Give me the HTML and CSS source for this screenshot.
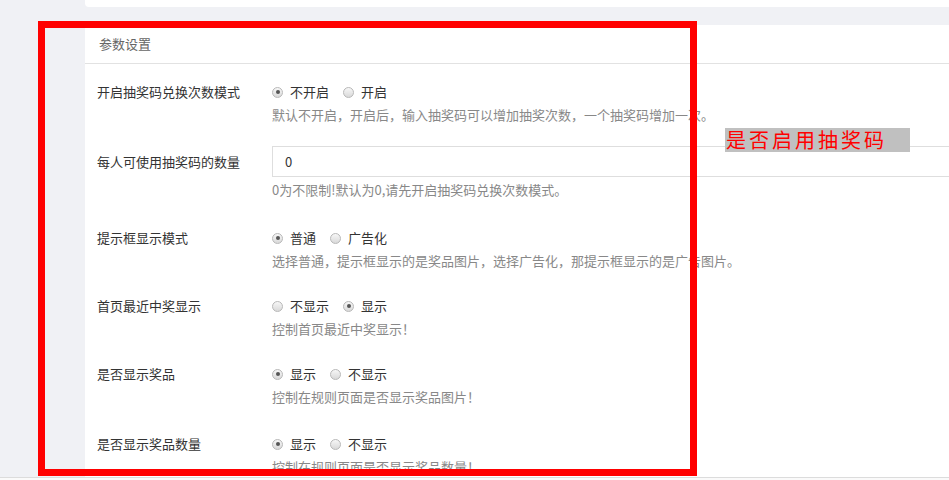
FILE: index.html
```html
<!DOCTYPE html>
<html lang="zh-CN">
<head>
<meta charset="utf-8">
<title>参数设置</title>
<link rel="stylesheet" href="styles.css">
</head>
<body>
<div class="page">
  <div class="main">
    <div class="topcard"></div>
    <div class="panel">
      <div class="panel-head">参数设置</div>
      <div class="panel-body">
        <div class="group">
          <div class="label">开启抽奖码兑换次数模式</div>
          <div class="control">
            <div class="radios">
              <span class="radio checked"></span><span class="rtext">不开启</span>
              <span class="radio"></span><span class="rtext">开启</span>
            </div>
            <div class="help">默认不开启，开启后，输入抽奖码可以增加抽奖次数，一个抽奖码增加一次。</div>
          </div>
        </div>
        <div class="group group-input">
          <div class="label">每人可使用抽奖码的数量</div>
          <div class="control">
            <div class="input">0</div>
            <div class="help">0为不限制!默认为0,请先开启抽奖码兑换次数模式。</div>
          </div>
        </div>
        <div class="group">
          <div class="label">提示框显示模式</div>
          <div class="control">
            <div class="radios">
              <span class="radio checked"></span><span class="rtext">普通</span>
              <span class="radio"></span><span class="rtext">广告化</span>
            </div>
            <div class="help">选择普通，提示框显示的是奖品图片，选择广告化，那提示框显示的是广告图片。</div>
          </div>
        </div>
        <div class="group">
          <div class="label">首页最近中奖显示</div>
          <div class="control">
            <div class="radios">
              <span class="radio"></span><span class="rtext">不显示</span>
              <span class="radio checked"></span><span class="rtext">显示</span>
            </div>
            <div class="help">控制首页最近中奖显示！</div>
          </div>
        </div>
        <div class="group">
          <div class="label">是否显示奖品</div>
          <div class="control">
            <div class="radios">
              <span class="radio checked"></span><span class="rtext">显示</span>
              <span class="radio"></span><span class="rtext">不显示</span>
            </div>
            <div class="help">控制在规则页面是否显示奖品图片！</div>
          </div>
        </div>
        <div class="group group-last">
          <div class="label">是否显示奖品数量</div>
          <div class="control">
            <div class="radios">
              <span class="radio checked"></span><span class="rtext">显示</span>
              <span class="radio"></span><span class="rtext">不显示</span>
            </div>
            <div class="help">控制在规则页面是否显示奖品数量！</div>
          </div>
        </div>
      </div>
    </div>
  </div>
  <div class="bottom"></div>
  <div class="mark-box"></div>
  <div class="mark-note">是否启用抽奖码</div>
</div>
</body>
</html>
```

FILE: styles.css
```css
html, body {
  margin: 0;
  padding: 0;
}
body {
  background: #f0f1f5;
  font-family: "Noto Sans CJK SC", "Liberation Sans", sans-serif;
  font-size: 13px;
  color: #333;
}
.page {
  position: relative;
  width: 949px;
  height: 480px;
  overflow: hidden;
}
.main {
  height: 477px;
  padding-left: 85px;
  overflow: hidden;
}
.topcard {
  height: 7px;
  background: #fff;
  border-bottom-left-radius: 4px;
  margin-bottom: 18px;
}
.panel {
  background: #fff;
  height: 452px;
  overflow: hidden;
}
.panel-head {
  height: 38px;
  line-height: 38px;
  padding-left: 14px;
  color: #666;
  border-bottom: 1px solid #e2e2e2;
}
.panel-body {
  padding-top: 14px;
}
.group {
  display: flex;
  margin-bottom: 21px;
}
.group-last {
  padding-top: 2px;
}
.label {
  width: 175px;
  flex: none;
  padding-left: 12px;
  padding-top: 4px;
  line-height: 20px;
  color: #333;
}
.control {
  flex: 1;
  min-width: 0;
}
.radios {
  padding-top: 4px;
  height: 20px;
  display: flex;
  align-items: center;
}
.radio {
  width: 11px;
  height: 11px;
  box-sizing: border-box;
  border-radius: 50%;
  border: 1px solid #b8b8b8;
  background: linear-gradient(#f7f7f7, #d9d9d9);
  position: relative;
  margin-right: 7px;
}
.radio.checked::after {
  content: "";
  position: absolute;
  left: 2.5px;
  top: 2.5px;
  width: 4px;
  height: 4px;
  border-radius: 50%;
  background: #555;
}
.rtext {
  margin-right: 14px;
  line-height: 20px;
}
.help {
  margin-top: 3px;
  line-height: 20px;
  color: #888;
  white-space: nowrap;
}
.group-input {
  margin-bottom: 24px;
}
.group-input .label {
  padding-top: 0;
  line-height: 31px;
}
.input {
  height: 31px;
  box-sizing: border-box;
  border: 1px solid #dedede;
  border-right: none;
  padding-left: 12px;
  line-height: 29px;
  color: #333;
  font-size: 13px;
}
.bottom {
  height: 3px;
  border-top: 1px solid #dcdcdc;
  background: #fafafa;
}
.mark-box {
  position: absolute;
  left: 38px;
  top: 21px;
  width: 659px;
  height: 455px;
  box-sizing: border-box;
  border: 7px solid #ff0000;
}
.mark-note {
  position: absolute;
  left: 725px;
  top: 128px;
  width: 185px;
  height: 24px;
  background: #c0c0c0;
  color: #ff0000;
  font-size: 20px;
  line-height: 24px;
  letter-spacing: 3px;
  padding-left: 1px;
  box-sizing: border-box;
}
```
